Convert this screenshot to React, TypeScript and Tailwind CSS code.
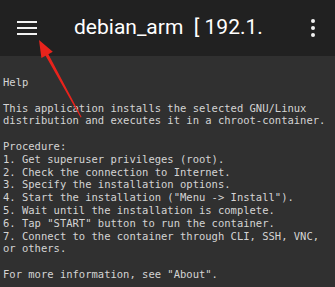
export default function App() {
  const lines = [
    "Help",
    "",
    "This application installs the selected GNU/Linux",
    "distribution and executes it in a chroot-container.",
    "",
    "Procedure:",
    "1. Get superuser privileges (root).",
    "2. Check the connection to Internet.",
    "3. Specify the installation options.",
    '4. Start the installation ("Menu -> Install").',
    "5. Wait until the installation is complete.",
    '6. Tap "START" button to run the container.',
    "7. Connect to the container through CLI, SSH, VNC,",
    "or others.",
    "",
    'For more information, see "About".',
  ];

  return (
    <div className="relative w-[335px] h-[287px] overflow-hidden bg-[#303030]">
      <header className="h-[56px] bg-[#212121] flex items-center">
        <div className="w-[74px] flex items-center pl-[17px]">
          <div className="flex flex-col gap-[4px] w-[20px]">
            <div className="h-[2px] bg-[#f2f2f2]"></div>
            <div className="h-[2px] bg-[#f2f2f2]"></div>
            <div className="h-[2px] bg-[#f2f2f2]"></div>
          </div>
        </div>
        <div className="flex-1 text-[21px] text-white font-['Roboto',sans-serif] whitespace-pre overflow-hidden">
          {"debian_arm  [ 192.1."}
        </div>
        <div className="w-[44px] flex flex-col items-center gap-[3px]">
          <div className="w-[4px] h-[4px] rounded-full bg-[#f2f2f2]"></div>
          <div className="w-[4px] h-[4px] rounded-full bg-[#f2f2f2]"></div>
          <div className="w-[4px] h-[4px] rounded-full bg-[#f2f2f2]"></div>
        </div>
      </header>
      <div className="pt-[20px] pl-[3px] font-['DejaVu_Sans_Mono',monospace] text-[10.5px] leading-[12.8px] text-[#d4d4d4] whitespace-pre">
        {lines.map((l, i) => (
          <div key={i} className="h-[12.8px]">
            {l}
          </div>
        ))}
      </div>
      <svg className="absolute left-0 top-0" width="335" height="287">
        <polygon
          points="39,40 52.8,51.8 48.4,54.3 81.6,117 80.6,117.4 45.6,55.8 41.4,58"
          fill="#e8231c"
        />
      </svg>
    </div>
  );
}
